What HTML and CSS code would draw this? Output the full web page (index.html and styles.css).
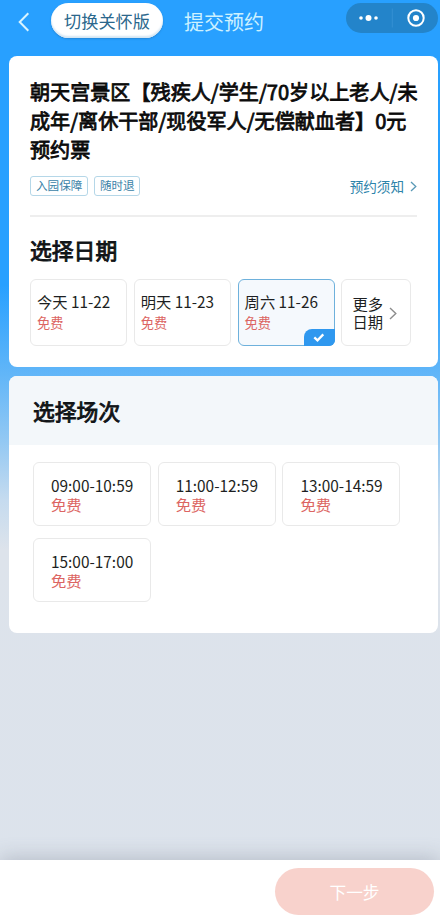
FILE: index.html
```
<!DOCTYPE html>
<html lang="zh-CN">
<head>
<meta charset="utf-8">
<meta name="viewport" content="width=device-width, initial-scale=1">
<title>提交预约</title>
<link rel="stylesheet" href="styles.css">
</head>
<body>
<div class="page">
  <header class="nav">
    <svg class="back" width="12" height="20" viewBox="0 0 12 20"><path d="M10.3 1.3 1.7 10l8.6 8.7"/></svg>
    <button class="care">切换关怀版</button>
    <h1 class="nav-title">提交预约</h1>
    <div class="capsule">
      <svg width="92" height="30" viewBox="0 0 92 30">
        <circle cx="15" cy="15" r="1.8" fill="#fff"/><circle cx="22.5" cy="15" r="3" fill="#fff"/><circle cx="30" cy="15" r="1.8" fill="#fff"/>
        <path d="M46.3 5.5v19" stroke="#3490d2" stroke-width="1"/>
        <circle cx="70" cy="15" r="7.7" fill="none" stroke="#fff" stroke-width="2"/><circle cx="70" cy="15" r="3.1" fill="#fff"/>
      </svg>
    </div>
  </header>

  <main>
    <section class="card ticket">
      <h2 class="ticket-name">朝天宫景区【残疾人/学生/70岁以上老人/未<br>成年/离休干部/现役军人/无偿献血者】0元<br>预约票</h2>
      <div class="meta">
        <span class="tag">入园保障</span><span class="tag">随时退</span>
        <a class="notice">预约须知 <svg width="7" height="11" viewBox="0 0 7 11"><path d="M1 1l4.8 4.5L1 10"/></svg></a>
      </div>
      <h3 class="heading">选择日期</h3>
      <div class="dates">
        <div class="date"><span>今天 11-22</span><em>免费</em></div>
        <div class="date"><span>明天 11-23</span><em>免费</em></div>
        <div class="date selected"><span>周六 11-26</span><em>免费</em>
          <i class="check"><svg width="12" height="9" viewBox="0 0 12 9"><path d="M1.3 4.3l3.2 3L10.3 1.4"/></svg></i>
        </div>
        <div class="more"><span>更多<br>日期</span><svg width="8" height="13" viewBox="0 0 8 13"><path d="M1 1l5.8 5.5L1 12"/></svg></div>
      </div>
    </section>

    <section class="card sessions">
      <h3 class="heading sessions-head">选择场次</h3>
      <div class="slots">
        <div class="slot"><span>09:00-10:59</span><em>免费</em></div>
        <div class="slot"><span>11:00-12:59</span><em>免费</em></div>
        <div class="slot"><span>13:00-14:59</span><em>免费</em></div>
        <div class="slot"><span>15:00-17:00</span><em>免费</em></div>
      </div>
    </section>
  </main>

  <footer class="bar"><button class="next">下一步</button></footer>
</div>
</body>
</html>
```
FILE: styles.css
```
* { box-sizing: border-box; margin: 0; padding: 0; }
body { font-family: "Noto Sans CJK SC", sans-serif; color: #1d1f22; }
button { font-family: inherit; border: 0; }
em, i { font-style: normal; }
svg { display: block; flex: none; fill: none; }

.page {
  height: 915px;
  display: flex;
  flex-direction: column;
  overflow: hidden;
  background: linear-gradient(#28a0ff 0, #28a0ff 285px, #62b6f8 375px, #92c8f3 440px, #c5dbef 500px, #dde3eb 550px, #dce3ec 100%);
}

.nav { height: 56px; flex: none; display: flex; align-items: flex-start; padding: 3px 2px 0 18px; }
.back { margin-top: 9px; stroke: #d9f4ff; stroke-width: 2; }
.care {
  width: 112px; height: 35px; margin-left: 21px;
  border-radius: 18px; background: #fff;
  box-shadow: inset 0 -2px 2px #d3e5f3, 0 1px 2px #2385d5;
  font-size: 17.2px; line-height: 35px; color: #2b678c;
  white-space: nowrap;
}
.nav-title { margin-left: 21px; font-size: 20px; line-height: 38px; font-weight: 400; color: #cdf1ff; }
.capsule { margin-left: auto; width: 92px; height: 30px; border-radius: 15px; background: #2384ca; }

.card { width: 429px; margin-left: 9px; border-radius: 8px; background: #fff; }
.ticket { height: 311px; padding: 21px 21px 0; }
.ticket-name {
  font-size: 20.1px; line-height: 29px; font-weight: 400; color: #0b0b0b; white-space: nowrap;
  -webkit-text-stroke: .8px #0b0b0b;
}
.meta {
  display: flex; align-items: center; gap: 6px;
  height: 53px; padding-bottom: 8px;
  border-bottom: 2px solid #eee;
}
.tag {
  height: 20px; padding: 0 5px;
  border: 1px solid #b5d7e8; border-radius: 3px;
  font-size: 11.6px; line-height: 17px; color: #3b83a8;
}
.tag + .tag { padding: 0 4.5px; }
.notice { display: flex; align-items: center; gap: 6px; margin-left: auto; font-size: 13.6px; line-height: 20px; color: #2d83aa; }
.notice svg { stroke: #5999b6; stroke-width: 1.3; margin-top: 2px; }
.heading { font-size: 21.8px; line-height: 32px; font-weight: 400; color: #111417; -webkit-text-stroke: .9px #111417; }
.ticket .heading { margin-top: 17px; }

.dates { display: flex; gap: 6.5px; margin-top: 13px; }
.date, .more, .slot { border: 1px solid #e9e9e9; border-radius: 6px; }
.date { position: relative; width: 97.3px; height: 67px; padding: 10px 0 0 6px; }
.date span, .date em, .slot span, .slot em { display: block; white-space: nowrap; }
.date span { font-size: 15.3px; line-height: 22px; }
.date em { font-size: 13.2px; line-height: 22px; }
em { color: #dc6562; }
.selected { border-color: #6eb1dc; background: #f5f9fd; }
.check {
  position: absolute; right: -1px; bottom: -1px;
  width: 31px; height: 17px;
  border-radius: 8px 0 6px 0; background: #2f98ef;
  display: flex; align-items: center; justify-content: center;
}
.check svg { stroke: #fff; stroke-width: 2.3; }
.more { width: 70px; height: 67px; padding: 0 0 1px 10px; display: flex; align-items: center; gap: 6px; }
.more span { font-size: 15.3px; line-height: 18.5px; }
.more svg { stroke: #8c8c8c; stroke-width: 1.4; margin-top: 2px; }

.sessions { height: 257px; margin-top: 9px; overflow: hidden; }
.sessions-head { height: 69px; padding: 19px 0 0 24px; background: #f3f7fa; }
.slots { display: grid; grid-template-columns: repeat(3, 118px); gap: 12px 6.7px; padding: 17px 0 0 24px; }
.slot { height: 64px; padding: 13px 0 0 17px; }
.slot span { font-size: 15.4px; line-height: 19px; }
.slot em { font-size: 15.3px; line-height: 18px; }

.bar {
  height: 55px; margin-top: auto; flex: none;
  display: flex; justify-content: flex-end; padding: 8px 6px 0;
  background: #fff; box-shadow: 0 -2px 20px rgba(100, 105, 120, .32);
}
.next { width: 159px; height: 47px; flex: none; border-radius: 24px; background: #f8d2cc; color: #fff; font-size: 16.7px; }
```
